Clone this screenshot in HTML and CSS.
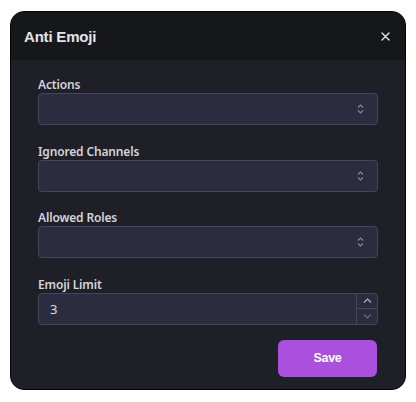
FILE: index.html
```html
<!DOCTYPE html>
<html>
<head>
<meta charset="utf-8">
<link rel="stylesheet" href="styles.css">
</head>
<body>
<div class="modal">
  <div class="modal-header">
    <h2 class="title">Anti Emoji</h2>
    <button class="close" aria-label="Close">
      <svg width="9" height="9" viewBox="0 0 9 9"><path d="M1 1L8 8M8 1L1 8" stroke="#e6e6e6" stroke-width="1.4" stroke-linecap="round"/></svg>
    </button>
  </div>
  <div class="modal-body">
    <div class="field">
      <label class="label">Actions</label>
      <div class="select">
        <svg class="chev" width="7" height="10" viewBox="0 0 7 10"><path d="M1 3.5L3.5 1L6 3.5M1 6.5L3.5 9L6 6.5" fill="none" stroke="#8a8b9a" stroke-width="1.1"/></svg>
      </div>
    </div>
    <div class="field">
      <label class="label">Ignored Channels</label>
      <div class="select">
        <svg class="chev" width="7" height="10" viewBox="0 0 7 10"><path d="M1 3.5L3.5 1L6 3.5M1 6.5L3.5 9L6 6.5" fill="none" stroke="#8a8b9a" stroke-width="1.1"/></svg>
      </div>
    </div>
    <div class="field">
      <label class="label">Allowed Roles</label>
      <div class="select">
        <svg class="chev" width="7" height="10" viewBox="0 0 7 10"><path d="M1 3.5L3.5 1L6 3.5M1 6.5L3.5 9L6 6.5" fill="none" stroke="#8a8b9a" stroke-width="1.1"/></svg>
      </div>
    </div>
    <div class="field">
      <label class="label">Emoji Limit</label>
      <div class="number">
        <span class="value">3</span>
        <div class="spin">
          <div class="spin-btn">
            <svg width="9" height="5" viewBox="0 0 9 5"><path d="M1 4.5L4.5 1L8 4.5" fill="none" stroke="#b4b5c2" stroke-width="1.1"/></svg>
          </div>
          <div class="spin-btn">
            <svg width="9" height="5" viewBox="0 0 9 5"><path d="M1 0.5L4.5 4L8 0.5" fill="none" stroke="#6c6d7e" stroke-width="1.1"/></svg>
          </div>
        </div>
      </div>
    </div>
    <div class="actions">
      <button class="save">Save</button>
    </div>
  </div>
</div>
</body>
</html>
```
FILE: styles.css
```css
html, body {
  margin: 0;
  padding: 0;
  background: #ffffff;
}
body {
  padding: 11px 10px 0 10px;
  font-family: "Noto Sans", "Open Sans", sans-serif;
}
.modal {
  width: 396px;
  height: 379px;
  box-sizing: border-box;
  border: 1px solid #050507;
  border-radius: 14px;
  background: #1e1f27;
  overflow: hidden;
  display: flex;
  flex-direction: column;
}
.modal-header {
  height: 48px;
  flex: none;
  background: #16171b;
  display: flex;
  align-items: center;
  justify-content: space-between;
  padding: 0 15px 0 13px;
}
.title {
  margin: 0;
  font-family: "Liberation Sans", Arial, sans-serif;
  font-weight: 700;
  font-size: 15px;
  color: #e4e4e8;
  letter-spacing: -0.2px;
}
.close {
  background: none;
  border: 0;
  padding: 0;
  width: 9px;
  height: 9px;
  display: flex;
}
.modal-body {
  flex: 1;
  padding: 16px 27px 13px 27px;
  display: flex;
  flex-direction: column;
  gap: 17.5px;
}
.field {
  display: flex;
  flex-direction: column;
}
.label {
  font-size: 12px;
  font-weight: 600;
  letter-spacing: -0.15px;
  color: #d4d4dc;
  line-height: 17px;
  height: 17px;
}
.select, .number {
  height: 32px;
  box-sizing: border-box;
  border: 1px solid #45465a;
  border-radius: 4px;
  background: #2b2c3f;
  display: flex;
  align-items: center;
}
.select {
  justify-content: flex-end;
  padding-right: 13px;
}
.chev {
  display: block;
}
.number {
  padding-left: 11px;
  overflow: hidden;
}
.value {
  flex: 1;
  font-size: 13px;
  color: #dcdce4;
}
.spin {
  width: 20px;
  align-self: stretch;
  border-left: 1px solid #45465a;
  display: flex;
  flex-direction: column;
}
.spin-btn {
  flex: 1;
  display: flex;
  align-items: center;
  justify-content: center;
}
.spin-btn + .spin-btn {
  border-top: 1px solid #45465a;
}
.actions {
  display: flex;
  justify-content: flex-end;
  margin-top: -2.5px;
  padding-right: 1px;
}
.save {
  width: 99px;
  height: 37px;
  border: 0;
  border-radius: 6px;
  background: #ab4fdf;
  color: #ffffff;
  font-family: "Liberation Sans", Arial, sans-serif;
  font-weight: 700;
  font-size: 12.5px;
  letter-spacing: -0.3px;
}
```
